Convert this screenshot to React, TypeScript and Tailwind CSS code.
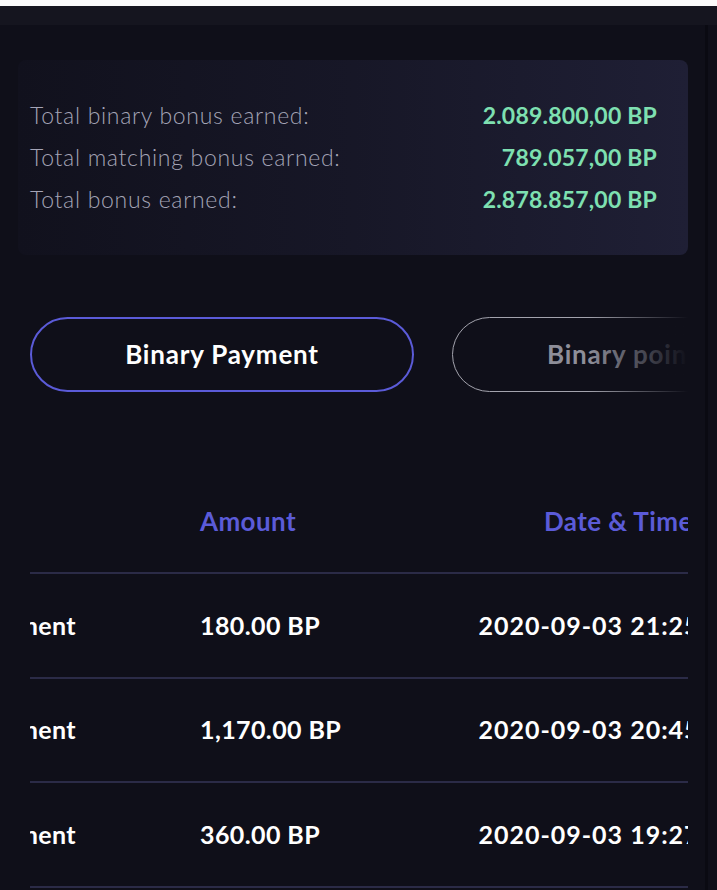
import { useLayoutEffect, useRef } from 'react'

const font = { fontFamily: '"Lato", "Liberation Sans", sans-serif' }

const totals = [
  { label: 'Total binary bonus earned:', value: '2.089.800,00 BP' },
  { label: 'Total matching bonus earned:', value: '789.057,00 BP' },
  { label: 'Total bonus earned:', value: '2.878.857,00 BP' },
]

const rows = [
  { type: 'Binary Payment', amount: '180.00 BP', date: '2020-09-03 21:25' },
  { type: 'Binary Payment', amount: '1,170.00 BP', date: '2020-09-03 20:45' },
  { type: 'Binary Payment', amount: '360.00 BP', date: '2020-09-03 19:27' },
]

const grid = 'grid grid-cols-[220px_280px_418px] w-[918px] border-b-2 border-[#2b2b47]'

const BonusCard = () => (
  <div className="ml-[18px] mt-[35px] h-[195px] rounded-lg bg-linear-to-r from-[#11111d] via-[#171727] to-[#1f1f35] pt-[34px] pl-[12px] pr-[31px]">
    {totals.map((t) => (
      <div key={t.label} className="flex h-[42px] items-center justify-between">
        <span className="text-[23px] font-light tracking-[0.7px] text-[#a4a4b6]">{t.label}</span>
        <span className="text-[23px] font-bold tracking-[0.2px] text-[#7ee0b1]">{t.value}</span>
      </div>
    ))}
  </div>
)

const Tabs = () => (
  <div className="relative ml-[30px] mt-[62px] w-[658px] overflow-hidden">
    <div className="flex w-max gap-[38px]">
      <button className="h-[75px] w-[384px] rounded-full border-2 border-[#5b5bd8] text-[26px] font-bold tracking-[0.8px] text-white">
        Binary Payment
      </button>
      <button className="h-[75px] w-[384px] rounded-full border-[1.5px] border-[#a3a3ad] pl-[94px] text-left text-[26px] font-bold tracking-[0.8px] text-[#8e8e99]">
        Binary points
      </button>
    </div>
    <div className="pointer-events-none absolute right-0 top-0 h-full w-[100px] bg-linear-to-r from-transparent to-[#0f0f19]" />
  </div>
)

const HistoryTable = () => {
  const ref = useRef<HTMLDivElement>(null)
  useLayoutEffect(() => {
    if (ref.current) ref.current.scrollLeft = 150
  }, [])
  return (
    <div ref={ref} className="ml-[30px] mt-[78px] w-[658px] overflow-hidden">
      <div className={`${grid} h-[104px] items-center text-[26px] font-bold tracking-[0.4px] text-[#5b5bd8]`}>
        <div>Type</div>
        <div className="pl-[100px]">Amount</div>
        <div className="pl-[164px]">Date &amp; Time</div>
      </div>
      {rows.map((r, i) => (
        <div key={i} className={`${grid} h-[104.5px] items-center text-[25px] font-bold text-white`}>
          <div className="pr-6 text-right tracking-[0.4px]">{r.type}</div>
          <div className="pl-[100px] tracking-[0.4px]">{r.amount}</div>
          <div className="text-center whitespace-nowrap tracking-[1px]">{r.date}</div>
        </div>
      ))}
    </div>
  )
}

const App = () => {
  return (
    <div className="flex h-[890px] w-[717px] flex-col overflow-hidden bg-[#0f0f19]" style={font}>
      <div className="h-[6px] bg-[#fbfbfb]" />
      <div className="h-[19px] bg-[#15151f]" />
      <div className="flex flex-1">
        <main className="w-[688px]">
          <BonusCard />
          <Tabs />
          <HistoryTable />
        </main>
        <div className="flex flex-1 justify-center">
          <div className="ml-[8px] w-[3px] bg-[#0a0a12]" />
        </div>
      </div>
    </div>
  )
}

export default App
